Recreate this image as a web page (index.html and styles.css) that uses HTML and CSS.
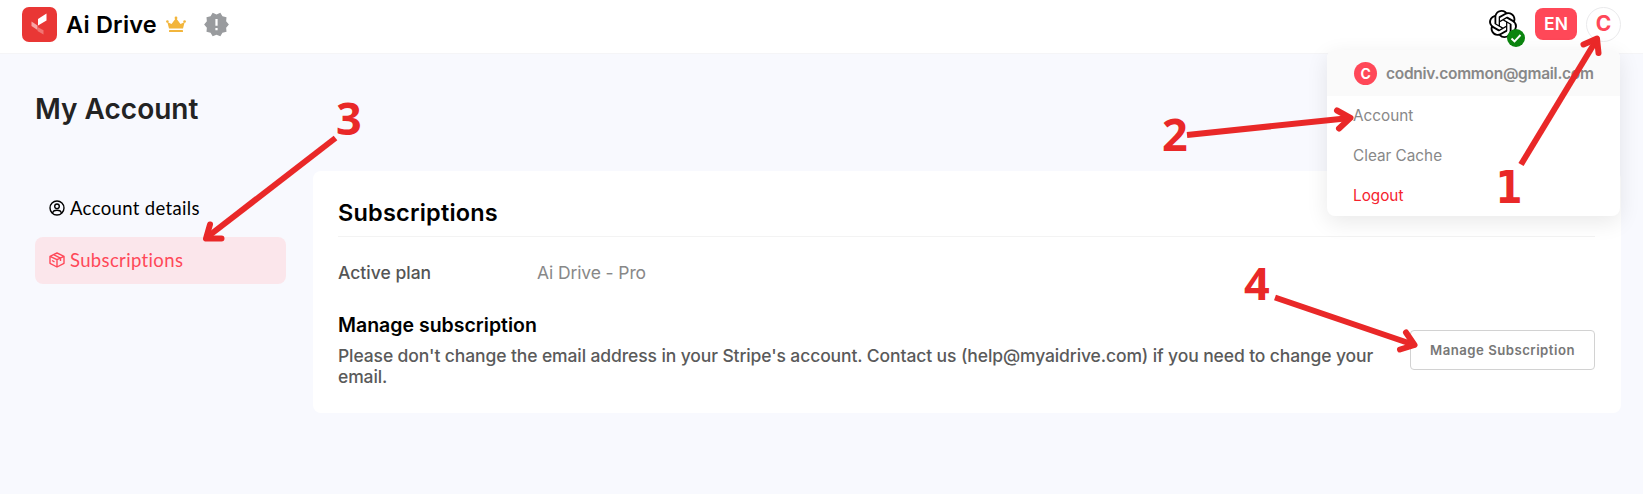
FILE: index.html
```html
<!DOCTYPE html>
<html lang="en">
<head>
<meta charset="utf-8">
<title>My Account</title>
<link rel="stylesheet" href="styles.css">
</head>
<body>
<header class="topbar">
  <div class="brand">
    <svg class="logo" viewBox="0 0 35 35"><rect width="35" height="35" rx="7" fill="#e93735"/><path d="M16 12l8.500-5.500v7L16 18.500z" fill="#fff"/><path d="M9.500 14.500l6 4v4.500l-6-4z" fill="#f7a6a6"/><path d="M15.500 20l6 3.300v4.200l-6-3.500z" fill="#f17573"/></svg>
    <span class="brand-name">Ai Drive</span>
    <svg class="crown" viewBox="0 0 20 16"><path d="M3 12 1.300 5.500 5.500 7.500 10 1.500l4.500 6 4.200-2L17 12z" fill="#f2b53c"/><circle cx="1.400" cy="5" r="1.300" fill="#f2b53c"/><circle cx="10" cy="1.500" r="1.400" fill="#f2b53c"/><circle cx="18.600" cy="5" r="1.300" fill="#f2b53c"/><rect x="3" y="13.500" width="14" height="2" rx=".6" fill="#f2b53c"/></svg>
    <svg class="notice" viewBox="0 0 24 24"><path d="M23 12l-2.440-2.780.34-3.680-3.610-.82-1.890-3.180L12 3 8.600 1.540 6.710 4.720l-3.610.81.34 3.680L1 12l2.440 2.780-.34 3.690 3.610.82 1.890 3.180L12 21l3.400 1.460 1.890-3.180 3.610-.82-.34-3.680L23 12zm-10 5h-2v-2h2v2zm0-4h-2V7h2v6z" fill="#999b9e"/></svg>
  </div>
  <div class="tools">
    <span class="gpt">
      <svg class="gpt-mark" viewBox="0 0 24 24"><path d="M22.2819 9.8211a5.9847 5.9847 0 0 0-.5157-4.9108 6.0462 6.0462 0 0 0-6.5098-2.9A6.0651 6.0651 0 0 0 4.9807 4.1818a5.9847 5.9847 0 0 0-3.9977 2.9 6.0462 6.0462 0 0 0 .7427 7.0966 5.98 5.98 0 0 0 .511 4.9107 6.051 6.051 0 0 0 6.5146 2.9001A5.9847 5.9847 0 0 0 13.2599 24a6.0557 6.0557 0 0 0 5.7718-4.2058 5.9894 5.9894 0 0 0 3.9977-2.9001 6.0557 6.0557 0 0 0-.7475-7.0729zm-9.022 12.6081a4.4755 4.4755 0 0 1-2.8764-1.0408l.1419-.0804 4.7783-2.7582a.7948.7948 0 0 0 .3927-.6813v-6.7369l2.02 1.1686a.071.071 0 0 1 .038.052v5.5826a4.504 4.504 0 0 1-4.4945 4.4944zm-9.6607-4.1254a4.4708 4.4708 0 0 1-.5346-3.0137l.142.0852 4.783 2.7582a.7712.7712 0 0 0 .7806 0l5.8428-3.3685v2.3324a.0804.0804 0 0 1-.0332.0615L9.74 19.9502a4.4992 4.4992 0 0 1-6.1408-1.6464zM2.3408 7.8956a4.485 4.485 0 0 1 2.3655-1.9728V11.6a.7664.7664 0 0 0 .3879.6765l5.8144 3.3543-2.0201 1.1685a.0757.0757 0 0 1-.071 0l-4.8303-2.7865A4.504 4.504 0 0 1 2.3408 7.872zm16.5963 3.8558L13.1038 8.364 15.1192 7.2a.0757.0757 0 0 1 .071 0l4.8303 2.7913a4.4944 4.4944 0 0 1-.6765 8.1042v-5.6772a.79.79 0 0 0-.407-.667zm2.0107-3.0231l-.142-.0852-4.7735-2.7818a.7759.7759 0 0 0-.7854 0L9.409 9.2297V6.8974a.0662.0662 0 0 1 .0284-.0615l4.8303-2.7866a4.4992 4.4992 0 0 1 6.6802 4.66zM8.3065 12.863l-2.02-1.1638a.0804.0804 0 0 1-.038-.0567V6.0742a4.4992 4.4992 0 0 1 7.3757-3.4537l-.142.0805L8.704 5.459a.7948.7948 0 0 0-.3927.6813zm1.0976-2.3654l2.602-1.4998 2.6069 1.4998v2.9994l-2.5974 1.4997-2.6067-1.4997Z"/></svg>
      <svg class="gpt-check" viewBox="0 0 18 18"><circle cx="9" cy="9" r="9" fill="#0b850f"/><path d="M4.500 9.500l3 3 6-6.500" fill="none" stroke="#fff" stroke-width="1.900"/></svg>
    </span>
    <span class="lang">EN</span>
    <span class="avatar">C</span>
  </div>
</header>
<main class="page">
  <h1 class="page-title">My Account</h1>
  <div class="columns">
    <nav class="side">
      <a class="side-item"><svg class="side-icon" viewBox="0 0 16 16"><circle cx="8" cy="8" r="7"/><circle cx="8" cy="6.300" r="2.300"/><path d="M3.600 13.200c.4-2.200 2-2.900 4.400-2.900s4 .7 4.400 2.900"/></svg><span>Account details</span></a>
      <a class="side-item side-item-on"><svg class="side-icon" viewBox="0 0 16 16"><path d="M8 1l7 3.300v7L8 15l-7-3.700v-7zM1 4.300l7 3.400 7-3.400M8 7.700V15M4.500 2.700l7 3.400v3M3 8.500l2.500 1.300"/></svg><span>Subscriptions</span></a>
    </nav>
    <section class="card">
      <h2 class="card-title">Subscriptions</h2>
      <div class="plan"><span class="plan-label">Active plan</span><span class="plan-value">Ai Drive - Pro</span></div>
      <div class="manage">
        <div class="manage-info">
          <h3 class="manage-title">Manage subscription</h3>
          <p class="manage-text">Please don't change the email address in your Stripe's account. Contact us (help@myaidrive.com) if you need to change your<br>email.</p>
        </div>
        <button class="manage-button">Manage Subscription</button>
      </div>
    </section>
  </div>
</main>
<div class="menu">
  <div class="menu-head"><span class="menu-avatar">C</span><span class="menu-email">codniv.common@gmail.com</span></div>
  <a class="menu-item">Account</a>
  <a class="menu-item">Clear Cache</a>
  <a class="menu-item menu-logout">Logout</a>
</div>
<svg class="notes" viewBox="0 0 1643 494">
  <g class="arrow">
    <path d="M1521 164.500L1597 39"/><path class="tip" d="M1583.500 44.500L1597 38.500 1598.500 53"/>
    <path d="M1187 135L1350 118"/><path class="tip" d="M1337 110.500L1350.500 117.800 1339 128.500"/>
    <path d="M335.500 138L206 238"/><path class="tip" d="M210 224.500L206 238.500H221.500"/>
    <path d="M1275 297.500L1413 344.500"/><path class="tip" d="M1406 332.500L1414.500 345 1400 349.500"/>
  </g>
  <g class="digits">
    <text class="one" x="1495.500" y="203" textLength="27" lengthAdjust="spacingAndGlyphs">1</text>
    <text x="1162" y="151">2</text>
    <text x="336" y="134.500">3</text>
    <text x="1244" y="300">4</text>
  </g>
</svg>
</body>
</html>
```
FILE: styles.css
```css
* { box-sizing: border-box; }
body { margin: 0; height: 494px; position: relative; overflow: hidden; background: #f8f9fe; font-family: Inter, "Liberation Sans", sans-serif; color: #000; }
svg { display: block; flex: none; }
.topbar { height: 54px; padding: 0 22px; display: flex; justify-content: space-between; background: #fff; border-bottom: 1px solid #f5f5f7; }
.brand, .tools { display: flex; align-items: center; height: 48px; }
.logo { width: 35px; height: 35px; }
.brand-name { width: 100px; padding: 1px 0 0 9px; font-size: 23.5px; font-weight: 600; line-height: 30px; letter-spacing: .22px; white-space: nowrap; }
.crown { width: 20px; height: 17px; margin-left: 9px; }
.notice { width: 27px; height: 27px; margin-left: 17px; }
.gpt { position: relative; width: 28px; height: 28px; margin-right: 18px; }
.gpt-mark { width: 28px; height: 28px; }
.gpt-check { position: absolute; left: 18px; top: 19px; width: 18px; height: 18px; }
.lang { width: 42px; height: 32px; border-radius: 8px; background: #ff4858; color: #fff; font-size: 17.5px; font-weight: 600; line-height: 32px; text-align: center; }
.avatar { width: 35px; height: 35px; margin-left: 9px; border: 1px solid #eaeaec; border-radius: 50%; color: #ff4858; font-size: 21px; font-weight: 700; line-height: 32px; text-align: center; }
.page { padding: 37px 22px 0 35px; }
.page-title { margin: 0; font-size: 28px; line-height: 36px; font-weight: 600; color: #232323; }
.columns { display: flex; gap: 27px; margin-top: 44px; }
.side { width: 251px; padding-top: 14px; }
.side-item { display: flex; align-items: center; gap: 5px; height: 47px; padding: 0 0 1px 14px; border-radius: 8px; font-family: Lato, sans-serif; font-size: 18.5px; letter-spacing: .35px; }
.side-item + .side-item { margin-top: 5px; }
.side-item-on { background: #fbe6eb; color: #ff4858; }
.side-icon { width: 16px; height: 16px; fill: none; stroke: currentColor; stroke-width: 1.4; stroke-linejoin: round; }
.card { flex: 1; height: 242px; padding: 25px 26px 0 25px; border-radius: 8px; background: #fff; }
.card-title { margin: 0; height: 41px; border-bottom: 1px solid #f3f3f3; font-size: 23.5px; line-height: 34px; font-weight: 600; letter-spacing: .2px; }
.plan { display: flex; height: 24px; margin-top: 24px; font-size: 17.5px; line-height: 24px; }
.plan-label { width: 199px; font-weight: 500; color: #555; }
.plan-value { color: #888; letter-spacing: -.12px; }
.manage { display: flex; justify-content: space-between; margin-top: 27px; }
.manage-info { white-space: nowrap; }
.manage-title { margin: 0; font-size: 19.5px; line-height: 26px; font-weight: 600; }
.manage-text { margin: 7px 0 0; font-size: 17.5px; line-height: 21px; font-weight: 500; letter-spacing: -.112px; color: #5a5a5a; }
.manage-button { width: 185px; height: 40px; margin-top: 18px; padding: 0; border: 1px solid #d2d2d2; border-radius: 4px; background: #fff; color: #777; font: 600 13.2px Inter, sans-serif; letter-spacing: .48px; }
.menu { position: absolute; left: 1327px; top: 50px; width: 293px; height: 166px; border-radius: 8px; background: #fff; box-shadow: 0 6px 22px rgba(0,0,0,.09); overflow: hidden; }
.menu-head { display: flex; align-items: center; height: 46px; padding-left: 27px; background: #fafafa; color: #888; font-size: 15.5px; font-weight: 600; letter-spacing: -.27px; }
.menu-avatar { width: 23px; height: 23px; margin-right: 9px; border-radius: 50%; background: #ff4858; color: #fff; font-size: 14px; font-weight: 700; line-height: 23px; text-align: center; }
.menu-item { display: block; height: 40px; padding-left: 26px; font-size: 15.3px; line-height: 40px; color: #888; }
.menu-logout { color: #f5222d; }
.notes { position: absolute; left: 0; top: 0; width: 1643px; height: 494px; pointer-events: none; }
.arrow { fill: none; stroke: #e92828; stroke-width: 6; }
.tip { stroke-linecap: round; stroke-linejoin: round; }
.digits { fill: #e92828; font-family: "Noto Sans", sans-serif; font-size: 45px; font-weight: 700; }
.one { font-family: "DejaVu Sans", sans-serif; font-size: 44px; }
```
